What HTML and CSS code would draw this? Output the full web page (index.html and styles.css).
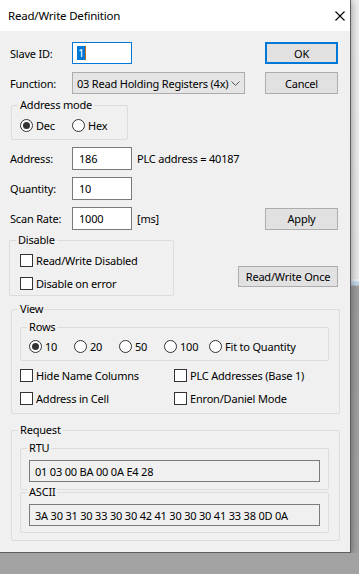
FILE: index.html
```html
<!DOCTYPE html>
<html>
  <head>
    <title>Read/Write Definition</title>
    <link rel="stylesheet" href="styles.css">
  </head>
  <body>
    <div class="dialog">
      <div class="title-bar">
        <span class="title">Read/Write Definition</span>
        <svg class="close-icon" width="10" height="10" viewBox="0 0 10 10">
          <path d="M0.5 0.5 L9.5 9.5 M9.5 0.5 L0.5 9.5" stroke="#000" stroke-width="1.1" fill="none"/>
        </svg>
      </div>

      <div class="content">
        <div class="row">
          <span class="label">Slave ID:</span>
          <div class="textbox is-focused"><span class="selected">1</span></div>
          <button type="button" class="button is-default">OK</button>
        </div>

        <div class="row row-function">
          <span class="label">Function:</span>
          <div class="select">
            <span class="select-text">03 Read Holding Registers (4x)</span>
            <svg class="chevron" width="9" height="5" viewBox="0 0 9 5">
              <path d="M0.5 0.5 L4.5 4.5 L8.5 0.5" stroke="#555" stroke-width="1" fill="none"/>
            </svg>
          </div>
          <button type="button" class="button">Cancel</button>
        </div>

        <fieldset class="group group-mode">
          <legend>Address mode</legend>
          <div class="group-body mode-body">
            <span class="option mode-option"><span class="radio is-on"></span>Dec</span>
            <span class="option mode-option"><span class="radio"></span>Hex</span>
          </div>
        </fieldset>

        <div class="row row-field">
          <span class="label">Address:</span>
          <div class="textbox">186</div>
          <span class="note">PLC address = 40187</span>
        </div>
        <div class="row row-field">
          <span class="label">Quantity:</span>
          <div class="textbox">10</div>
        </div>
        <div class="row row-field">
          <span class="label">Scan Rate:</span>
          <div class="textbox">1000</div>
          <span class="note">[ms]</span>
          <button type="button" class="button">Apply</button>
        </div>

        <div class="disable-row">
          <fieldset class="group group-disable">
            <legend>Disable</legend>
            <div class="group-body disable-body">
              <span class="option"><span class="checkbox"></span>Read/Write Disabled</span>
              <span class="option"><span class="checkbox"></span>Disable on error</span>
            </div>
          </fieldset>
          <button type="button" class="button once-button">Read/Write Once</button>
        </div>

        <fieldset class="group group-view">
          <legend>View</legend>
          <div class="group-body view-body">
            <fieldset class="group group-rows">
              <legend>Rows</legend>
              <div class="group-body rows-body">
                <span class="option rows-option"><span class="radio is-on"></span>10</span>
                <span class="option rows-option"><span class="radio"></span>20</span>
                <span class="option rows-option"><span class="radio"></span>50</span>
                <span class="option rows-option"><span class="radio"></span>100</span>
                <span class="option"><span class="radio"></span>Fit to Quantity</span>
              </div>
            </fieldset>
            <div class="view-options">
              <span class="option"><span class="checkbox"></span>Hide Name Columns</span>
              <span class="option"><span class="checkbox"></span>PLC Addresses (Base 1)</span>
              <span class="option"><span class="checkbox"></span>Address in Cell</span>
              <span class="option"><span class="checkbox"></span>Enron/Daniel Mode</span>
            </div>
          </div>
        </fieldset>

        <fieldset class="group group-request">
          <legend>Request</legend>
          <div class="group-body request-body">
            <fieldset class="group group-frame">
              <legend>RTU</legend>
              <div class="group-body frame-body">
                <div class="readonly-box">01 03 00 BA 00 0A E4 28</div>
              </div>
            </fieldset>
            <fieldset class="group group-frame group-ascii">
              <legend>ASCII</legend>
              <div class="group-body frame-body frame-body-last">
                <div class="readonly-box">3A 30 31 30 33 30 30 42 41 30 30 30 41 33 38 0D 0A</div>
              </div>
            </fieldset>
          </div>
        </fieldset>
      </div>
    </div>
  </body>
</html>
```

FILE: styles.css
```css
* {
  box-sizing: border-box;
}
html {
  background: linear-gradient(to bottom, #ededed 0, #e6e6e6 279px, #f4f8fb 280px, #c4d8ea 282px, #c4d8ea 285px, #9d9d9d 286px, #a3a3a3 100%);
  height: 100%;
}
body {
  margin: 0;
  font-family: "Noto Sans", Arial, sans-serif;
  font-size: 11px;
  letter-spacing: -0.2px;
  color: #000;
}
.dialog {
  width: 351px;
  background-color: #f0f0f0;
  border-right: 1px solid #5e5e5e;
  border-bottom: 1px solid #5e5e5e;
  box-shadow: 1px 1px 7px rgba(0, 0, 0, 0.35);
}
.title-bar {
  height: 31px;
  background-color: white;
  display: flex;
  align-items: center;
  padding-left: 8px;
  padding-right: 5px;
}
.title {
  font-size: 11.5px;
  flex: 1;
}
.close-icon {
  display: block;
}
.content {
  padding: 11px 12px 11px 10px;
}
.row {
  display: flex;
  align-items: center;
  height: 22px;
}
.row-function {
  margin-top: 8px;
}
.row-field {
  height: 23px;
  margin-top: 7px;
}
.label {
  width: 62px;
}
.textbox {
  width: 60px;
  height: 100%;
  border: 1px solid #7a7a7a;
  background-color: white;
  padding-left: 6px;
  display: flex;
  align-items: center;
}
.textbox.is-focused {
  border-color: #0078d7;
  padding-left: 4px;
}
.selected {
  background-color: #0078d7;
  color: white;
  padding: 0 1px 0 1px;
  border-right: 1px solid #c46a1a;
  line-height: 14px;
}
.note {
  margin-left: 5px;
}
.button {
  margin-left: auto;
  width: 73px;
  height: 22px;
  border: 1px solid #adadad;
  background-color: #e1e1e1;
  font-family: "Noto Sans", Arial, sans-serif;
  font-size: 11px;
  letter-spacing: -0.2px;
  color: #000;
  padding: 0;
}
.is-default {
  border: 2px solid #0078d7;
}
.select {
  width: 173px;
  height: 22px;
  border: 1px solid #adadad;
  background-color: #e5e5e5;
  display: flex;
  align-items: center;
  padding-left: 4px;
  padding-right: 4px;
}
.select-text {
  white-space: nowrap;
}
.chevron {
  display: block;
  margin-left: auto;
  flex: none;
}
.group {
  margin: 0;
  padding: 0;
  border: 1px solid #dcdcdc;
  border-radius: 2px;
  min-width: 0;
}
.group legend {
  padding: 0 2px;
  margin-left: 6px;
  line-height: 14px;
  background-color: #f0f0f0;
}
.group-body {
  padding-left: 8px;
}
.option {
  display: inline-flex;
  align-items: center;
  height: 14px;
  white-space: nowrap;
}
.radio,
.checkbox {
  width: 13px;
  height: 13px;
  border: 1px solid #333;
  background-color: white;
  margin-right: 3px;
  flex: none;
}
.radio {
  border-radius: 50%;
  position: relative;
}
.radio.is-on::after {
  content: "";
  position: absolute;
  left: 2px;
  top: 2px;
  width: 7px;
  height: 7px;
  border-radius: 50%;
  background-color: #333;
}
.group-mode {
  margin-top: 4px;
  margin-left: 1px;
  width: 117px;
}
.mode-body {
  padding-top: 6px;
  padding-bottom: 7px;
  display: flex;
}
.mode-option {
  width: 52px;
}
.disable-row {
  display: flex;
  align-items: flex-start;
  margin-top: 3px;
}
.group-disable {
  width: 165px;
  margin-left: -1px;
}
.disable-body {
  padding: 6px 0 5px 10px;
  display: flex;
  flex-direction: column;
  gap: 9px;
}
.once-button {
  width: 100px;
  height: 21px;
  margin-top: 33px;
}
.group-view {
  margin-top: 6px;
  margin-left: 1px;
  width: 329px;
}
.view-body {
  padding-top: 4px;
  padding-bottom: 8px;
}
.group-rows {
  width: 309px;
}
.rows-body {
  padding: 5px 0 7px 8px;
  display: flex;
}
.rows-option {
  width: 45px;
}
.view-options {
  margin-top: 7px;
  display: grid;
  grid-template-columns: 154px 1fr;
  row-gap: 9px;
}
.group-request {
  margin-top: 9px;
  margin-left: 1px;
  width: 329px;
}
.request-body {
  padding-top: 4px;
  padding-bottom: 7px;
}
.group-frame {
  width: 309px;
}
.group-ascii {
  margin-top: -5px;
}
.frame-body {
  padding-top: 5px;
  padding-bottom: 7px;
}
.frame-body-last {
  padding-bottom: 6px;
}
.readonly-box {
  width: 291px;
  height: 22px;
  border: 1px solid #7a7a7a;
  background-color: #f0f0f0;
  padding-left: 5px;
  display: flex;
  align-items: center;
}
```
